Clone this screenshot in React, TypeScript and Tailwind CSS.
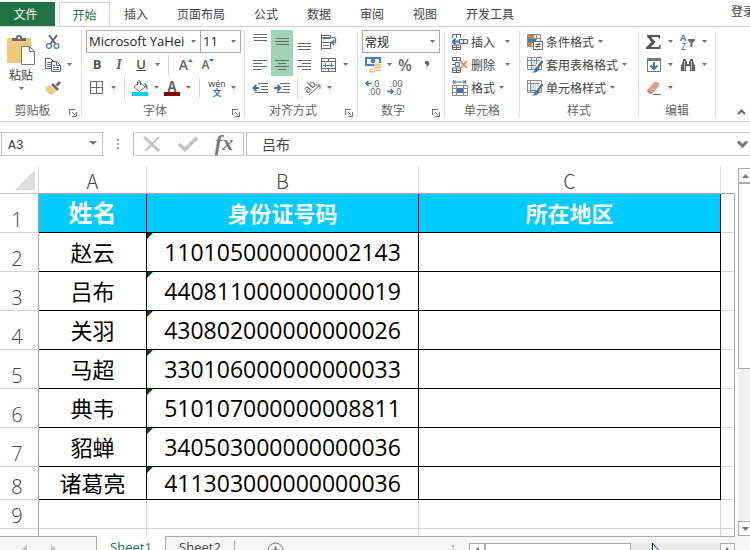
import React from "react";

type Kids = { children?: React.ReactNode };

const Arrow = () => (
  <svg width="5" height="3" viewBox="0 0 5 3" className="shrink-0" aria-hidden="true">
    <path d="M0 0h5L2.5 3z" fill="#6e6e6e" />
  </svg>
);

const Drop = ({ label }: { label: string }) => (
  <button aria-label={label} className="flex h-[23px] w-2.5 items-center justify-center">
    <Arrow />
  </button>
);

const Tool = ({ label, on, children }: Kids & { label: string; on?: boolean }) => (
  <button
    aria-label={label}
    className={
      on
        ? "flex h-[23px] w-[22px] items-center justify-center bg-[#9fd5b7]"
        : "flex h-[23px] w-[22px] items-center justify-center"
    }
  >
    {children}
  </button>
);

const Sep = () => <span className="h-[22px] w-px bg-[#d9d9d9]" />;

const Row = ({ children }: Kids) => <div className="flex h-[23px] items-center">{children}</div>;

const Group = ({
  name,
  width,
  launcher,
  children,
}: Kids & { name: string; width: string; launcher?: boolean }) => (
  <section aria-label={name} className={`flex shrink-0 ${width}`}>
    <div className="flex min-w-0 flex-1 flex-col">
      <div className="h-[69px]">{children}</div>
      <div className="flex h-[22px] items-center text-[#666]">
        <span className="flex-1 text-center">{name}</span>
        {launcher && (
          <button aria-label={`${name} 设置`} className="flex h-[22px] w-4 items-end justify-center pb-1">
            <svg width="8" height="8" viewBox="0 0 8 8" fill="none" stroke="#777" shapeRendering="crispEdges">
              <path d="M.5 6V.5H6M3 3l3.500 3.500M7.500 3v4.500H3" />
            </svg>
          </button>
        )}
      </div>
    </div>
    <span className="mb-1 mt-px w-px bg-[#dcdcdc]" />
  </section>
);

const Lines = ({ at, x }: { at: number[]; x: [number, number][] }) => (
  <svg width="16" height="16" viewBox="0 0 16 16" stroke="#6a6a6a" shapeRendering="crispEdges">
    {at.map((y, i) => (
      <path key={y} d={`M${x[i][0]} ${y + 0.5}H${x[i][1]}`} />
    ))}
  </svg>
);

const PasteIcon = () => (
  <svg width="28" height="30" viewBox="0 0 28 30">
    <path d="M0 3h24v25H0z" fill="#f0c87c" />
    <path d="M5 6V3h4q0-3 3-3t3 3h4v3z" fill="#6b6b6b" />
    <path d="M11 2h2v2h-2z" fill="#fff" />
    <path d="M14.500 11.500h8l5 5v13h-13z" fill="#fff" stroke="#777" />
    <path d="M22.500 11.500v5h5" fill="none" stroke="#777" />
  </svg>
);

const CutIcon = () => (
  <svg width="16" height="16" viewBox="0 0 16 16" fill="none">
    <path d="M4 1l6.500 9M12 1L5.500 10" stroke="#666" strokeWidth="2" />
    <circle cx="4" cy="12" r="2.400" stroke="#4a7ebb" strokeWidth="1.300" />
    <circle cx="11.500" cy="12" r="2.400" stroke="#4a7ebb" strokeWidth="1.300" />
  </svg>
);

const CopyIcon = () => (
  <svg width="16" height="16" viewBox="0 0 16 16" fill="#fff" stroke="#6a6a6a">
    <path d="M.5 1.500h5l3 3v7h-8z" />
    <path d="M2 5.500h4M2 7.500h4M2 9.500h4" stroke="#4a7ebb" />
    <path d="M6.500 4.500h5l4 4v6h-9z" />
    <path d="M11.500 4.500v4h4" fill="none" />
    <path d="M8 8.500h2M8 10.500h6M8 12.500h6" stroke="#4a7ebb" />
  </svg>
);

const PainterIcon = () => (
  <svg width="16" height="16" viewBox="0 0 16 16">
    <path d="M0 8l5-3 6 6-4 4q-5-1-7-7z" fill="#f0c87c" />
    <path d="M6 5l2-2 6 6-2 2z" fill="#6b6b6b" />
    <path d="M10.500 4.500L14 1l2 2-3.500 3.500z" fill="#6b6b6b" />
  </svg>
);

const BordersIcon = () => (
  <svg width="14" height="14" viewBox="0 0 14 14" fill="none" stroke="#6a6a6a" shapeRendering="crispEdges">
    <path d="M.5 .5h12v12H.5zM6.500 0v13M0 6.500h13" />
  </svg>
);

const FillIcon = () => (
  <svg width="16" height="16" viewBox="0 0 16 16">
    <path d="M7.500 2L13 7l-5.500 4.500L2 7z" fill="#fff" stroke="#6a6a6a" />
    <path d="M5.500 5V1.500q1.500-2 3 0V5" fill="none" stroke="#6a6a6a" />
    <path d="M12 3q4 0 3.500 7-2-1-2-3z" fill="#4a7ebb" />
    <path d="M0 12h16v4H0z" fill="#00ccff" />
  </svg>
);

const FontColor = () => (
  <span className="flex w-4 flex-col items-center border-b-4 border-[#8b0000] text-sm font-bold leading-3 text-[#5f5f5f]">
    A
  </span>
);

const WrapIcon = () => (
  <svg width="16" height="16" viewBox="0 0 16 16" fill="none" stroke="#6a6a6a">
    <path d="M.5 0v16M0 1.500h9.500v3H0M0 8.500h8.500M9.500 8v7M0 14.500h10" />
    <path d="M1 3.500h13M2 11.500h6" stroke="#4a7ebb" />
    <path d="M14.500 4v4.500H11M13 6l-2.500 2.500L13 11" stroke="#4a7ebb" strokeWidth="1.500" />
  </svg>
);

const MergeIcon = () => (
  <svg width="16" height="16" viewBox="0 0 16 16" fill="none" stroke="#6a6a6a" shapeRendering="crispEdges">
    <path d="M.5 1.500h14v13H.5zM0 4.500h15M0 11.500h15M7.500 1v3M7.500 12v3" />
    <path d="M2 8h11M4.500 6v4M10.500 6v4" stroke="#4a7ebb" />
  </svg>
);

const IndentIcon = ({ out }: { out?: boolean }) => (
  <svg width="16" height="16" viewBox="0 0 16 16" stroke="#6a6a6a">
    <path d="M6 3.500h10M9 6.500h7M9 9.500h7M3 12.500h13" shapeRendering="crispEdges" />
    <path
      d={out ? "M7 8H2M4.500 5L1.500 8l3 3" : "M0 8h5M3.500 5l3 3-3 3"}
      fill="none"
      stroke="#3c76b8"
      strokeWidth="2"
    />
  </svg>
);

const OrientIcon = () => (
  <svg width="18" height="16" viewBox="0 0 18 16" className="overflow-visible">
    <text x="0" y="11" fontSize="11" fill="#5f5f5f" transform="rotate(-45 5 8)" className="font-['Noto_Sans']">
      ab
    </text>
    <path d="M5 15L16 5M12 5h4v4" fill="none" stroke="#6a6a6a" />
  </svg>
);

const MoneyIcon = () => (
  <svg width="16" height="16" viewBox="0 0 16 16">
    <path d="M0 0h16v9H0z" fill="#4a7ebb" />
    <path d="M2 2h12v5H2z" fill="#fff" />
    <path d="M0 3l2-1v5H0z" fill="#4a7ebb" />
    <circle cx="8" cy="4" r="2.300" fill="#4a7ebb" />
    <path d="M4 9h12v7H4zM9 6h7v3H9z" fill="#fff" />
    <ellipse cx="12.500" cy="8" rx="3.500" ry="1.500" fill="#eec27a" />
    <path d="M9 10h7v1.500H9zM9 12.500h7V14H9zM4 12h4v1H4zM4 14h6v1.500H4z" fill="#eec27a" />
  </svg>
);

const DecimalIcon = ({ less }: { less?: boolean }) => (
  <svg width="16" height="16" viewBox="0 0 16 16" className="overflow-visible font-['Open_Sans']">
    <g fontSize="9" fill="#555">
      <text x={less ? 3 : 7} y="7">{less ? ".00" : ".0"}</text>
      <text x={less ? 7 : 3} y="15">{less ? ".0" : ".00"}</text>
    </g>
    <path
      d={less ? "M0 11.500h5M3.500 9L6 11.500 3.500 14" : "M7 3.500H1M3.500 1L1 3.500 3.500 6"}
      fill="none"
      stroke="#3c76b8"
      strokeWidth="1.500"
    />
  </svg>
);

const InsertIcon = () => (
  <svg width="16" height="16" viewBox="0 0 16 16" fill="none" stroke="#6a6a6a">
    <path d="M.5 4V.5h8V4M4.500 0v4M.5 15.500V11h8v4.500zM4.500 11v4M.5 13.500h8" />
    <path d="M7.500 5.500h8v4h-8z" fill="#d6e6f2" />
    <path d="M11.500 5.500v4" />
    <path d="M7 7.500H1M3.500 4.500l-3 3 3 3" stroke="#3c76b8" strokeWidth="1.800" />
  </svg>
);

const DeleteIcon = () => (
  <svg width="16" height="16" viewBox="0 0 16 16" fill="none" stroke="#6a6a6a">
    <path d="M.5 4V.5h8V4M4.500 0v4M0 3.500h9M.5 15.500V11h8v4.500zM4.500 11v4M.5 13.500h8M0 7.500h3" />
    <path d="M3.500 5.500h4v4h-4z" fill="#d6e6f2" stroke="#4a7ebb" />
    <path d="M8.500 4l6.500 7M15 4l-6.500 7" stroke="#e08a3c" strokeWidth="1.800" />
  </svg>
);

const FormatIcon = () => (
  <svg width="16" height="16" viewBox="0 0 16 16" fill="none" stroke="#6a6a6a">
    <path d="M1.500 0v4M13.500 0v4M2 2h11M4 .5L2 2l2 1.500M11 .5L13 2l-2 1.500" stroke="#4a7ebb" />
    <path d="M.5 5.500h15v10H.5zM4.500 5v10M11.500 5v10M0 8.500h15M0 12.500h15" stroke="#8a8a8a" />
    <path d="M5 8h6v5H5z" fill="#3c76b8" stroke="none" />
  </svg>
);

const CondIcon = () => (
  <svg width="16" height="16" viewBox="0 0 16 16" fill="none" stroke="#8a8a8a">
    <path d="M.5 .5h13v12H.5zM9.500 0v6M0 4.500h13M0 8.500h6" />
    <path d="M1 1h6v3H1z" fill="#d9822b" stroke="none" />
    <path d="M1 5h8v3H1z" fill="#3c76b8" stroke="none" />
    <path d="M1 9h4v3H1z" fill="#d9822b" stroke="none" />
    <path d="M6.500 7.500h9v8h-9z" fill="#fff" stroke="#666" />
    <path d="M8.500 10.500h5M8.500 12.500h5M12.500 9l-3 5" stroke="#555" />
  </svg>
);

const BrushTable = ({ cell }: { cell?: boolean }) => (
  <svg width="16" height="16" viewBox="0 0 16 16" fill="none" stroke="#8a8a8a">
    <path d="M4 4h9v8H4z" fill="#cfe0ee" stroke="none" />
    <path
      d={
        cell
          ? "M.5 .5h14v12H.5zM3.500 0v13M0 3.500h14M0 10.500h14"
          : "M.5 .5h14v12H.5zM4.500 0v13M9.500 0v13M0 3.500h14M0 8.500h14"
      }
    />
    <path d="M15.500 3L10 10" stroke="#fff" strokeWidth="4" />
    <path d="M15.500 4L11 10" stroke="#666" strokeWidth="2.200" />
    <path d="M4 15.500q3 0 4-4 1-2 3.500-1.500 1.500 1 .5 3-2 3-8 2.500z" fill="#3c76b8" stroke="none" />
  </svg>
);

const SigmaIcon = () => (
  <svg width="16" height="16" viewBox="0 0 16 16">
    <path d="M1 1h13v3.500h-1L12 3H5l4.500 5L5 13h7.500l1-2h1v4H0v-1.500L5.500 8 1 2.500z" fill="#555" />
  </svg>
);

const SortIcon = () => (
  <svg width="16" height="16" viewBox="0 0 16 16" className="overflow-visible font-['Open_Sans']">
    <text x="0" y="7" fontSize="9" fontWeight="700" fill="#4a7ebb">A</text>
    <text x="1" y="16" fontSize="9" fill="#666">Z</text>
    <path d="M8 5h7v1.500L12.500 9v4h-2V9L8 6.500z" fill="#6a6a6a" />
  </svg>
);

const FillDownIcon = () => (
  <svg width="16" height="16" viewBox="0 0 16 16" fill="none">
    <path d="M1.500 1.500h13v13h-13z" stroke="#777" />
    <path d="M1 1h14v3H1z" fill="#777" />
    <path d="M8 5v7M4.500 8.500L8 12l3.500-3.500" stroke="#3c76b8" strokeWidth="2" />
  </svg>
);

const FindIcon = () => (
  <svg width="16" height="16" viewBox="0 0 16 16" fill="#626262">
    <path d="M3 2h3v2h1v3h2V4h1V2h3v2l2 5v5h-5V9H6v5H1V9l2-5z" />
    <path d="M4.500 4v9M11.500 4v9" stroke="#bbb" />
  </svg>
);

const EraserIcon = () => (
  <svg width="16" height="16" viewBox="0 0 16 16">
    <path d="M2 9l6-7q2-1 5 1 1 1 0 3l-6 7z" fill="#dba58d" />
    <path d="M2 9l5 4-1 1q-2 0-4-1.500T2 9z" fill="#c7836b" />
    <path d="M7 14.500h8" stroke="#777" />
  </svg>
);

const tabs = ["插入", "页面布局", "公式", "数据", "审阅", "视图", "开发工具"];

const rows: { n: number; name: string; id: string }[] = [
  { n: 2, name: "赵云", id: "110105000000002143" },
  { n: 3, name: "吕布", id: "440811000000000019" },
  { n: 4, name: "关羽", id: "430802000000000026" },
  { n: 5, name: "马超", id: "330106000000000033" },
  { n: 6, name: "典韦", id: "510107000000008811" },
  { n: 7, name: "貂蝉", id: "340503000000000036" },
  { n: 8, name: "诸葛亮", id: "411303000000000036" },
];

const Wide = ({ icon, text, far }: { icon: React.ReactNode; text: string; far?: boolean }) => (
  <button className="flex h-[23px] items-center whitespace-nowrap">
    {icon}
    <span className="ml-[3px]">{text}</span>
    <span className={far ? "ml-2.5" : "ml-1"}>
      <Arrow />
    </span>
  </button>
);

const RowHead = ({ n }: { n: number | string }) => (
  <th
    scope="row"
    className="border-b border-r border-b-[#d4d4d4] border-r-[#a6a6a6] p-0 pr-1 align-bottom text-xl font-light leading-6 text-[#444]"
  >
    {n}
  </th>
);

const Ribbon = () => (
  <div className="flex h-[95px] shrink-0 border-b border-[#cfcfcf] pt-[3px]">
    <Group name="剪贴板" width="w-[82px]" launcher>
      <div className="flex">
        <button className="flex h-[69px] w-[42px] flex-col items-center pt-[5px] leading-4">
          <PasteIcon />
          <span className="mt-0.5">粘贴</span>
          <span className="mt-1">
            <Arrow />
          </span>
        </button>
        <div>
          <Row><Tool label="剪切"><CutIcon /></Tool></Row>
          <Row>
            <Tool label="复制"><CopyIcon /></Tool>
            <Drop label="复制选项" />
          </Row>
          <Row><Tool label="格式刷"><PainterIcon /></Tool></Row>
        </div>
      </div>
    </Group>

    <Group name="字体" width="w-[163px]" launcher>
      <div className="pl-1">
        <div className="flex h-[23px]">
          <label className="relative">
            <select
              aria-label="字体名称"
              className="h-[23px] w-[115px] appearance-none border border-[#ababab] bg-white pl-0.5 font-['Open_Sans'] text-[13px] text-[#222]"
            >
              <option>Microsoft YaHei</option>
            </select>
            <span className="pointer-events-none absolute right-[5px] top-2.5"><Arrow /></span>
          </label>
          <label className="relative -ml-px">
            <select
              aria-label="字号"
              className="h-[23px] w-[41px] appearance-none border border-[#ababab] bg-white pl-0.5 font-['Open_Sans'] text-[13px] text-[#222]"
            >
              <option>11</option>
            </select>
            <span className="pointer-events-none absolute right-[5px] top-2.5"><Arrow /></span>
          </label>
        </div>
        <Row>
          <Tool label="加粗"><b className="font-['Open_Sans'] text-[13px] text-[#555]">B</b></Tool>
          <Tool label="倾斜"><i className="font-['Liberation_Serif'] text-sm font-bold text-[#666]">I</i></Tool>
          <Tool label="下划线"><u className="font-['Open_Sans'] text-[13px] font-semibold text-[#555]">U</u></Tool>
          <Drop label="下划线选项" />
          <span className="mx-1.5 flex"><Sep /></span>
          <Tool label="增大字号">
            <span className="font-['Open_Sans'] text-sm font-semibold text-[#666]">A</span>
            <svg width="5" height="12" viewBox="0 0 5 12"><path d="M0 3h5L2.500 0z" fill="#3c76b8" /></svg>
          </Tool>
          <Tool label="减小字号">
            <span className="font-['Open_Sans'] text-xs font-semibold text-[#666]">A</span>
            <svg width="5" height="12" viewBox="0 0 5 12"><path d="M0 0h5L2.500 3z" fill="#3c76b8" /></svg>
          </Tool>
        </Row>
        <Row>
          <Tool label="边框"><BordersIcon /></Tool>
          <Drop label="边框选项" />
          <span className="ml-1.5 mr-1 flex"><Sep /></span>
          <Tool label="填充颜色"><FillIcon /></Tool>
          <Drop label="填充颜色选项" />
          <Tool label="字体颜色"><FontColor /></Tool>
          <Drop label="字体颜色选项" />
          <span className="mx-1.5 flex"><Sep /></span>
          <button aria-label="拼音" className="flex h-[23px] w-[22px] flex-col items-center justify-center text-[9px] leading-[9px]">
            <span className="font-['Open_Sans']">wén</span>
            <span className="font-bold text-[#3c76b8]">文</span>
          </button>
          <Drop label="拼音选项" />
        </Row>
      </div>
    </Group>

    <Group name="对齐方式" width="w-[113px]" launcher>
      <div className="pl-1">
        <Row>
          <Tool label="顶端对齐"><Lines at={[0, 3, 6]} x={[[2, 15], [1, 15], [2, 15]]} /></Tool>
          <Tool label="垂直居中" on><Lines at={[4, 7, 10]} x={[[2, 15], [1, 15], [2, 15]]} /></Tool>
          <Tool label="底端对齐"><Lines at={[9, 12, 15]} x={[[2, 15], [1, 15], [2, 15]]} /></Tool>
          <span className="ml-[3px]"><Tool label="自动换行"><WrapIcon /></Tool></span>
        </Row>
        <Row>
          <Tool label="左对齐"><Lines at={[3, 6, 9, 12]} x={[[1, 15], [1, 10], [1, 15], [1, 10]]} /></Tool>
          <Tool label="居中" on><Lines at={[3, 6, 9, 12]} x={[[1, 15], [4, 12], [1, 15], [4, 12]]} /></Tool>
          <Tool label="右对齐"><Lines at={[3, 6, 9, 12]} x={[[1, 15], [6, 15], [1, 15], [6, 15]]} /></Tool>
          <span className="ml-[3px]"><Tool label="合并后居中"><MergeIcon /></Tool></span>
          <Drop label="合并选项" />
        </Row>
        <Row>
          <Tool label="减少缩进量"><IndentIcon out /></Tool>
          <Tool label="增加缩进量"><IndentIcon /></Tool>
          <span className="mx-1 flex"><Sep /></span>
          <Tool label="方向"><OrientIcon /></Tool>
          <Drop label="方向选项" />
        </Row>
      </div>
    </Group>

    <Group name="数字" width="w-[87px]" launcher>
      <div className="pl-1">
        <label className="relative flex h-[23px]">
          <select
            aria-label="数字格式"
            className="h-[23px] w-[78px] appearance-none border border-[#ababab] bg-white pl-0.5 text-xs text-[#222]"
          >
            <option>常规</option>
          </select>
          <span className="pointer-events-none absolute right-[9px] top-2.5"><Arrow /></span>
        </label>
        <Row>
          <Tool label="会计数字格式"><MoneyIcon /></Tool>
          <Drop label="会计格式选项" />
          <Tool label="百分比样式"><span className="font-['Open_Sans'] text-base font-semibold text-[#666]">%</span></Tool>
          <Tool label="千位分隔样式">
            <svg width="6" height="8" viewBox="0 0 6 8"><path d="M1 0h3q2 1 1 4L2 7l1-3-2-1z" fill="#666" /></svg>
          </Tool>
        </Row>
        <Row>
          <Tool label="增加小数位数"><DecimalIcon /></Tool>
          <Tool label="减少小数位数"><DecimalIcon less /></Tool>
        </Row>
      </div>
    </Group>

    <Group name="单元格" width="w-[75px]">
      <div className="pl-[7px]">
        <Wide icon={<InsertIcon />} text="插入" far />
        <Wide icon={<DeleteIcon />} text="删除" far />
        <Wide icon={<FormatIcon />} text="格式" />
      </div>
    </Group>

    <Group name="样式" width="w-[119px]">
      <div className="pl-[7px]">
        <Wide icon={<CondIcon />} text="条件格式" />
        <Wide icon={<BrushTable />} text="套用表格格式" />
        <Wide icon={<BrushTable cell />} text="单元格样式" />
      </div>
    </Group>

    <Group name="编辑" width="w-[77px]">
      <div className="pl-1">
        <Row>
          <Tool label="自动求和"><SigmaIcon /></Tool>
          <Drop label="求和选项" />
          <span className="ml-0.5"><Tool label="排序和筛选"><SortIcon /></Tool></span>
          <Drop label="排序选项" />
        </Row>
        <Row>
          <Tool label="填充"><FillDownIcon /></Tool>
          <Drop label="填充选项" />
          <span className="ml-0.5"><Tool label="查找和选择"><FindIcon /></Tool></span>
          <Drop label="查找选项" />
        </Row>
        <Row>
          <Tool label="清除"><EraserIcon /></Tool>
          <Drop label="清除选项" />
        </Row>
      </div>
    </Group>

    <button aria-label="折叠功能区" className="ml-auto flex items-end pb-1.5 pr-1">
      <svg width="9" height="6" viewBox="0 0 9 6" fill="none"><path d="M1 5l3.500-3.500L8 5" stroke="#666" strokeWidth="2" /></svg>
    </button>
  </div>
);

const FormulaBar = () => (
  <div className="flex h-11 shrink-0 items-start pl-px pt-2.5 text-[#444]">
    <label className="relative flex">
      <input
        aria-label="名称框"
        defaultValue="A3"
        className="h-6 w-[102px] border border-[#c6c6c6] pl-1.5 pt-0.5 font-['Liberation_Mono'] text-[13px]"
      />
      <svg width="8" height="4" viewBox="0 0 8 4" className="pointer-events-none absolute right-1.5 top-[9px]">
        <path d="M0 0h8L4 4z" fill="#777" />
      </svg>
    </label>
    <svg width="30" height="24" viewBox="0 0 30 24" fill="#a6a6a6">
      <path d="M14 7h2v2h-2zM14 11h2v2h-2zM14 15h2v2h-2z" />
    </svg>
    <div className="flex h-6 w-[111px] items-center border border-[#c6c6c6]">
      <button aria-label="取消" className="flex w-9 justify-center">
        <svg width="18" height="18" viewBox="0 0 18 18" fill="none" stroke="#c3c3c3">
          <path d="M1 2l15 14" strokeWidth="3" />
          <path d="M16 2L2 16" strokeWidth="2" />
        </svg>
      </button>
      <button aria-label="输入" className="flex w-9 justify-center">
        <svg width="20" height="16" viewBox="0 0 20 16" fill="none" stroke="#c3c3c3" strokeWidth="3.500">
          <path d="M1 8l6 5.500L19 1.500" />
        </svg>
      </button>
      <button
        aria-label="插入函数"
        className="w-9 pb-0.5 text-center font-['Liberation_Serif'] text-[22px] font-bold italic leading-5 text-[#777]"
      >
        fx
      </button>
    </div>
    <div className="ml-0.5 flex h-6 flex-1 items-center border-y border-l border-[#c6c6c6]">
      <input
        aria-label="编辑栏"
        defaultValue="吕布"
        className="min-w-0 flex-1 pl-[15px] text-sm outline-none"
      />
      <button aria-label="展开编辑栏" className="pr-0.5">
        <svg width="11" height="8" viewBox="0 0 11 8" fill="none"><path d="M1 1.500l4.500 4.500L10 1.500" stroke="#777" strokeWidth="3" /></svg>
      </button>
    </div>
  </div>
);

const colHead =
  "border-b border-r border-b-[#a6a6a6] border-r-[#dcdcdc] p-0 pt-0.5 text-xl font-light leading-6 text-[#444]";
const titleCell = "border-b border-r border-black bg-[#00ccff] p-0 text-white font-bold";
const cell = "border-b border-r border-black p-0";
const bare = "border-b border-r border-[#d4d4d4] p-0";
const edge = "border-b border-r border-b-[#d4d4d4] border-r-[#a6a6a6] p-0";

const Sheet = () => (
  <table className="w-full table-fixed border-separate border-spacing-0 text-center font-['Open_Sans','Noto_Sans_CJK_SC',sans-serif] text-black">
    <colgroup>
      <col className="w-[39px]" />
      <col className="w-[108px]" />
      <col className="w-[272px]" />
      <col />
      <col className="w-[14px]" />
    </colgroup>
    <thead className="font-['Noto_Sans_CJK_SC',sans-serif]">
      <tr className="h-7">
        <td className="border-b border-r border-b-[#c6c6c6] border-r-[#dcdcdc] p-0 pr-[3px] pt-1 align-top">
          <svg width="20" height="20" viewBox="0 0 20 20" className="ml-auto"><path d="M20 0v20H0z" fill="#dedede" /></svg>
        </td>
        <th scope="col" className={colHead}>A</th>
        <th scope="col" className={colHead}>B</th>
        <th scope="col" className={colHead}>C</th>
        <td className="border-b border-[#a6a6a6] p-0" />
      </tr>
    </thead>
    <tbody>
      <tr className="h-[39px]">
        <RowHead n={1} />
        <td className={`${titleCell} text-2xl leading-8`}>姓名</td>
        <td className={`${titleCell} text-[22px] leading-8`}>身份证号码</td>
        <td className={`${titleCell} text-[22px] leading-8`}>所在地区</td>
        <td className={edge} />
      </tr>
      {rows.map((r) => (
        <tr key={r.n} className={r.n === 8 ? "h-[33px]" : "h-[39px]"}>
          <RowHead n={r.n} />
          <td className={`${cell} text-[22px] leading-8`}>{r.name}</td>
          <td className={`${cell} relative text-[23px] leading-8`}>
            <svg width="6" height="6" viewBox="0 0 6 6" className="absolute left-0 top-0"><path d="M0 0h6L0 6z" fill="#0b3d17" /></svg>
            {r.id}
          </td>
          <td className={cell} />
          <td className={edge} />
        </tr>
      ))}
      <tr className="h-[29px]">
        <RowHead n={9} />
        <td className={bare} />
        <td className={bare} />
        <td className={bare} />
        <td className={edge} />
      </tr>
      <tr className="h-[29px]">
        <RowHead n="" />
        <td className={bare} />
        <td className={bare} />
        <td className={bare} />
        <td className={edge} />
      </tr>
    </tbody>
  </table>
);

const VScroll = () => (
  <div className="flex w-[15px] shrink-0 flex-col overflow-hidden pl-[3px] pt-0.5">
    <button aria-label="向上滚动" className="flex h-[15px] w-[15px] shrink-0 items-center justify-center border border-[#ababab] bg-white">
      <svg width="7" height="4" viewBox="0 0 7 4"><path d="M0 4h7L3.500 0z" fill="#777" /></svg>
    </button>
    <div className="flex min-h-0 w-[15px] flex-1 flex-col bg-[#f0f0f0]">
      <div className="h-[55%] border border-[#ababab] bg-white" />
    </div>
    <button aria-label="向下滚动" className="flex h-[15px] w-[15px] shrink-0 items-center justify-center border border-[#ababab] bg-white">
      <svg width="7" height="4" viewBox="0 0 7 4"><path d="M0 0h7L3.500 4z" fill="#777" /></svg>
    </button>
  </div>
);

const SheetTabs = () => (
  <div className="flex h-[14px] shrink-0 items-start overflow-hidden bg-[#f5f5f5] font-['Open_Sans'] text-[13px]">
    <div className="flex h-6 w-[97px] items-center gap-6 border-r border-t border-[#ababab] pl-[22px]">
      <button aria-label="上一张">
        <svg width="5" height="8" viewBox="0 0 5 8"><path d="M5 0v8L0 4z" fill="#c3c3c3" /></svg>
      </button>
      <button aria-label="下一张">
        <svg width="5" height="8" viewBox="0 0 5 8"><path d="M0 0v8l5-4z" fill="#c3c3c3" /></svg>
      </button>
    </div>
    <button className="h-6 w-[68px] bg-white text-[#217346]">Sheet1</button>
    <div className="flex h-6 min-w-0 flex-1 border-l border-t border-[#ababab] text-[#444]">
      <button className="h-[22px] w-[68px]">Sheet2</button>
      <span className="mt-[3px] w-px bg-[#ababab]" />
      <button aria-label="新工作表" className="ml-8 flex items-start pt-[5px]">
        <svg width="17" height="17" viewBox="0 0 17 17" fill="none" stroke="#777">
          <circle cx="8.500" cy="8.500" r="7.500" />
          <path d="M8.500 4.500v8M4.500 8.500h8" strokeWidth="2" />
        </svg>
      </button>
      <svg width="2" height="12" viewBox="0 0 2 12" fill="#ababab" className="ml-auto mr-[15px] mt-2">
        <path d="M0 0h2v2H0zM0 4h2v2H0zM0 8h2v2H0z" />
      </svg>
      <div className="relative mt-1.5 flex h-[15px] w-[266px] bg-[#e8e8e8]">
        <button aria-label="向左滚动" className="flex w-4 items-center justify-center border border-[#ababab] bg-white">
          <svg width="4" height="7" viewBox="0 0 4 7"><path d="M4 0v7L0 3.500z" fill="#666" /></svg>
        </button>
        <div className="-ml-px w-[147px] border border-l-2 border-[#ababab] bg-white" />
        <button aria-label="向右滚动" className="ml-auto flex w-[15px] items-center justify-center border border-[#ababab] bg-white">
          <svg width="4" height="7" viewBox="0 0 4 7"><path d="M0 0v7l4-3.500z" fill="#666" /></svg>
        </button>
        <svg width="12" height="18" viewBox="0 0 12 18" className="absolute left-[183px] top-0">
          <path d="M.5 0v16l4-4h6z" fill="#fff" stroke="#1c2b4a" />
        </svg>
      </div>
    </div>
    <div className="w-[15px]" />
  </div>
);

export default function App() {
  return (
    <div className="flex h-screen flex-col overflow-hidden bg-white font-['Noto_Sans_CJK_SC',sans-serif] text-xs text-[#444]">
      <nav className="flex h-[27px] shrink-0 overflow-hidden border-b border-[#d4d4d4] pt-0.5">
        <button className="w-[55px] bg-[#217346] pr-1 text-white">文件</button>
        <button className="-mb-px ml-1 h-[25px] w-[51px] border-x border-t border-[#d4d4d4] bg-white text-[#217346]">开始</button>
        <div className="ml-3.5 flex gap-[29px]">
          {tabs.map((t) => (
            <button key={t} className="whitespace-nowrap">{t}</button>
          ))}
        </div>
        <button className="-mr-[5px] ml-auto shrink-0 pb-1.5">登录</button>
      </nav>
      <Ribbon />
      <FormulaBar />
      <main className="flex min-h-0 flex-1 overflow-hidden">
        <div className="min-w-0 flex-1 overflow-hidden">
          <Sheet />
        </div>
        <VScroll />
      </main>
      <SheetTabs />
    </div>
  );
}
